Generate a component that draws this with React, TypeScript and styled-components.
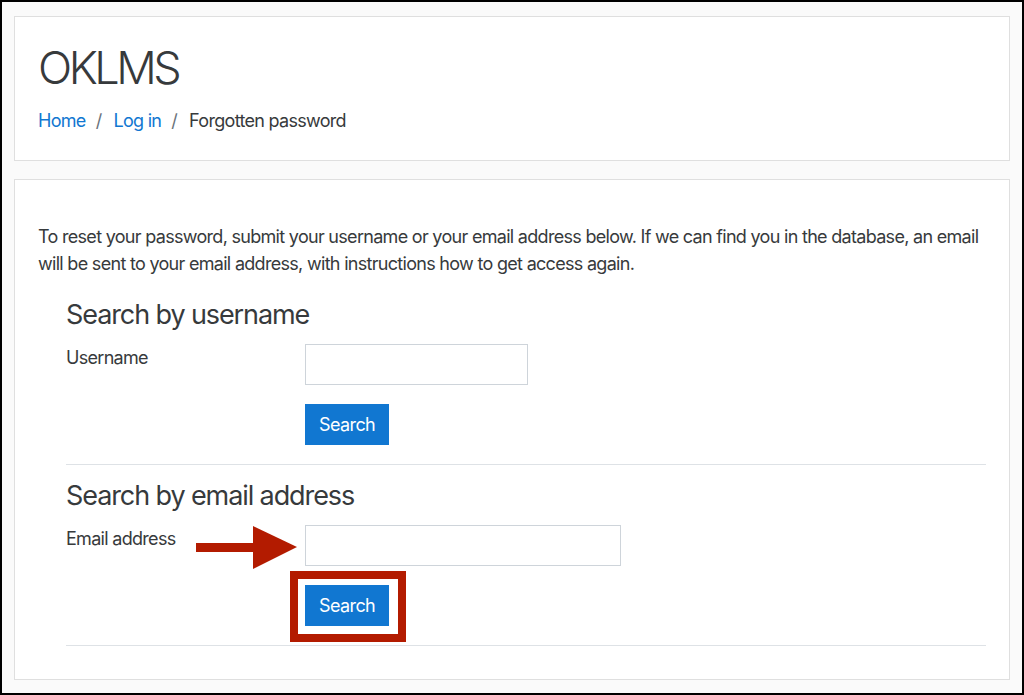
import styled, { createGlobalStyle } from "styled-components";

const GlobalStyle = createGlobalStyle`
  html, body {
    margin: 0;
    padding: 0;
    background: #ffffff;
  }
  body {
    font-family: Inter, "Noto Sans", "Liberation Sans", sans-serif;
    color: #373a3c;
    letter-spacing: -0.7px;
  }
  * {
    box-sizing: border-box;
  }
`;

const Frame = styled.div`
  width: 1024px;
  height: 695px;
  border: 2px solid #000;
  background: #fafafa;
  padding: 14px 12px 13px 12px;
  display: flex;
  flex-direction: column;
  gap: 18px;
  overflow: hidden;
`;

const Card = styled.div`
  background: #fff;
  border: 1px solid #dfdfdf;
`;

const HeaderCard = styled(Card)`
  height: 145px;
  padding: 24px 23px 0 23px;
`;

const SiteName = styled.h1`
  margin: 0;
  font-size: 45px;
  font-weight: 300;
  line-height: 54px;
  letter-spacing: -3.5px;
  color: #373a3c;
`;

const Crumbs = styled.nav`
  display: flex;
  align-items: center;
  margin-top: 12px;
  font-size: 18px;
  line-height: 27px;
`;

const Crumb = styled.a<{ $current?: boolean }>`
  color: ${(p) => (p.$current ? "#373a3c" : "#1177d1")};
  text-decoration: none;
`;

const Sep = styled.span`
  color: #6a737b;
  padding: 0 12px 0 10px;
`;

const MainCard = styled(Card)`
  flex: 1;
  padding: 43px 23px 0 23px;
`;

const Intro = styled.p`
  margin: 0 0 21px 0;
  font-size: 18px;
  line-height: 27px;
`;

const Fieldset = styled.section`
  margin: 0 0 14px 28px;
  border-bottom: 1px solid #dee2e6;
`;

const Legend = styled.h3`
  margin: 0 0 12px 0;
  font-size: 27px;
  font-weight: 400;
  line-height: 34px;
  letter-spacing: -1.1px;
`;

const Row = styled.div`
  position: relative;
  display: grid;
  grid-template-columns: 239px 1fr;
  align-items: start;
  margin-bottom: 19px;
`;

const Label = styled.label`
  font-size: 18px;
  line-height: 27px;
`;

const Input = styled.input<{ $w: number }>`
  width: ${(p) => p.$w}px;
  height: 41px;
  border: 1px solid #ced4da;
  background: #fff;
  font-size: 18px;
  padding: 6px 12px;
  outline: none;
`;

const ButtonWrap = styled.div`
  position: relative;
  width: fit-content;
`;

const Button = styled.button`
  display: block;
  height: 41px;
  padding: 0 13px;
  border: 1px solid #1177d1;
  background: #1177d1;
  color: #fff;
  font-family: inherit;
  font-size: 18px;
  letter-spacing: -0.6px;
  cursor: pointer;
`;

const Highlight = styled.span`
  position: absolute;
  top: -14px;
  left: -15px;
  right: -17px;
  bottom: -16px;
  border: 8px solid #b31b00;
  pointer-events: none;
`;

const Arrow = styled.svg`
  position: absolute;
  left: 130px;
  top: 1px;
  pointer-events: none;
`;

const App: React.FC = () => {
  return (
    <>
      <GlobalStyle />
      <Frame>
        <HeaderCard>
          <SiteName>OKLMS</SiteName>
          <Crumbs>
            <Crumb href="#">Home</Crumb>
            <Sep>/</Sep>
            <Crumb href="#">Log in</Crumb>
            <Sep>/</Sep>
            <Crumb $current>Forgotten password</Crumb>
          </Crumbs>
        </HeaderCard>
        <MainCard>
          <Intro>
            To reset your password, submit your username or your email address below. If we can find
            you in the database, an email will be sent to your email address, with instructions how
            to get access again.
          </Intro>

          <Fieldset>
            <Legend>Search by username</Legend>
            <Row>
              <Label>Username</Label>
              <Input $w={223} type="text" />
            </Row>
            <Row>
              <span />
              <ButtonWrap>
                <Button>Search</Button>
              </ButtonWrap>
            </Row>
          </Fieldset>

          <Fieldset>
            <Legend>Search by email address</Legend>
            <Row>
              <Label>Email address</Label>
              <Input $w={316} type="text" />
              <Arrow width="101" height="44" viewBox="0 0 101 44">
                <rect x="0" y="17" width="58" height="9" fill="#b31b00" />
                <polygon points="57,0 101,21 57,43" fill="#b31b00" />
              </Arrow>
            </Row>
            <Row>
              <span />
              <ButtonWrap>
                <Button>Search</Button>
                <Highlight />
              </ButtonWrap>
            </Row>
          </Fieldset>
        </MainCard>
      </Frame>
    </>
  );
};

export default App;
